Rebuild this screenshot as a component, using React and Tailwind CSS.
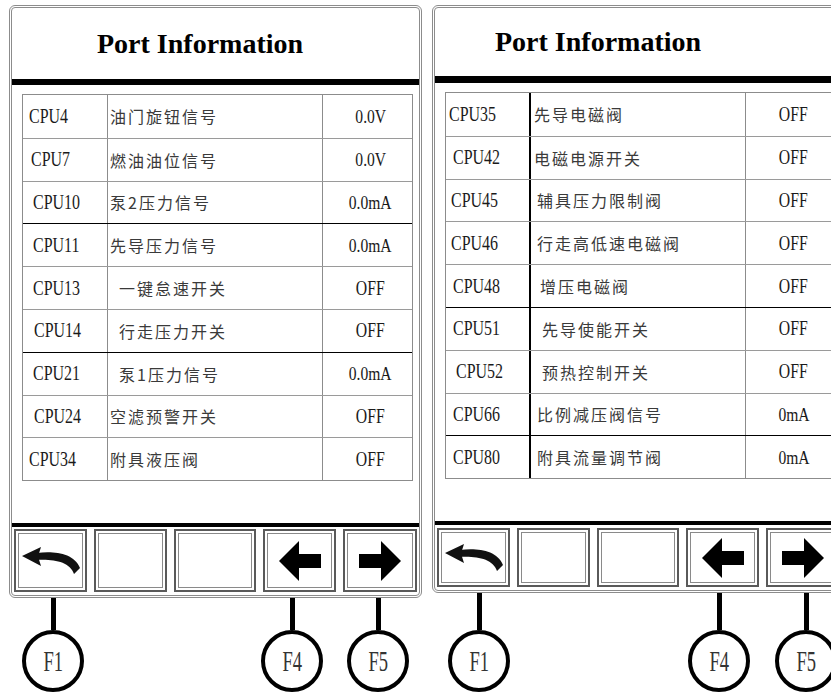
import React from 'react';

const serif = "font-['Liberation_Serif','Times_New_Roman',serif]";
const cjk = "font-['Noto_Sans_CJK_SC','Noto_Sans_CJK_TC',sans-serif]";

const leftRows = [
  { id: 'CPU4', name: '油门旋钮信号', val: '0.0V', idCls: 'pl-[6px]', nameCls: 'pl-[2px]' },
  { id: 'CPU7', name: '燃油油位信号', val: '0.0V', idCls: 'pl-[8px]', nameCls: 'pl-[2px]' },
  { id: 'CPU10', name: '泵2压力信号', val: '0.0mA', idCls: 'pl-[10px]', nameCls: 'pl-[2px]' },
  { id: 'CPU11', name: '先导压力信号', val: '0.0mA', dark: true, idCls: 'pl-[10px]', nameCls: 'pl-[2px]' },
  { id: 'CPU13', name: '一键怠速开关', val: 'OFF', idCls: 'pl-[10px]', nameCls: 'pl-[11px]' },
  { id: 'CPU14', name: '行走压力开关', val: 'OFF', idCls: 'pl-[11px]', nameCls: 'pl-[11px]' },
  { id: 'CPU21', name: '泵1压力信号', val: '0.0mA', dark: true, idCls: 'pl-[10px]', nameCls: 'pl-[11px]' },
  { id: 'CPU24', name: '空滤预警开关', val: 'OFF', idCls: 'pl-[11px]', nameCls: 'pl-[2px]' },
  { id: 'CPU34', name: '附具液压阀', val: 'OFF', idCls: 'pl-[6px]', nameCls: 'pl-[2px]' },
];

const rightRows = [
  { id: 'CPU35', name: '先导电磁阀', val: 'OFF', idCls: 'pl-[3px]', nameCls: 'pl-[3px]' },
  { id: 'CPU42', name: '电磁电源开关', val: 'OFF', idCls: 'pl-[7px]', nameCls: 'pl-[3px]' },
  { id: 'CPU45', name: '辅具压力限制阀', val: 'OFF', idCls: 'pl-[5px]', nameCls: 'pl-[6px]' },
  { id: 'CPU46', name: '行走高低速电磁阀', val: 'OFF', idCls: 'pl-[5px]', nameCls: 'pl-[6px]' },
  { id: 'CPU48', name: '增压电磁阀', val: 'OFF', idCls: 'pl-[7px]', nameCls: 'pl-[9px]' },
  { id: 'CPU51', name: '先导使能开关', val: 'OFF', dark: true, idCls: 'pl-[7px]', nameCls: 'pl-[11px]' },
  { id: 'CPU52', name: '预热控制开关', val: 'OFF', idCls: 'pl-[10px]', nameCls: 'pl-[11px]' },
  { id: 'CPU66', name: '比例减压阀信号', val: '0mA', idCls: 'pl-[7px]', nameCls: 'pl-[6px]' },
  { id: 'CPU80', name: '附具流量调节阀', val: '0mA', dark: true, idCls: 'pl-[7px]', nameCls: 'pl-[6px]' },
];

function BackArrow() {
  return (
    <svg width="58" height="28" viewBox="0 0 58 28">
      <path d="M0 9 L19 0 L16 9.5 L19 19 Z" fill="#111" />
      <path d="M15 6 C 32 4, 52 6, 58 21 L 52 27 C 48 15, 32 12, 15 13 Z" fill="#111" />
    </svg>
  );
}

function LeftArrow() {
  return (
    <svg width="42" height="40" viewBox="0 0 42 40">
      <path d="M0 20 L20 0 L20 13 L42 13 L42 27 L20 27 L20 40 Z" fill="#000" />
    </svg>
  );
}

function RightArrow() {
  return (
    <svg width="42" height="40" viewBox="0 0 42 40">
      <path d="M42 20 L22 0 L22 13 L0 13 L0 27 L22 27 L22 40 Z" fill="#000" />
    </svg>
  );
}

function Key({ w, h, children }) {
  return (
    <div className={`${w} ${h} shrink-0 border-2 border-[#5a5a5a] p-[2px]`}>
      <div className="w-full h-full border border-[#8a8a8a] flex items-center justify-center">
        {children}
      </div>
    </div>
  );
}

function Row({ row, first, col1Border }) {
  const top = first ? '' : row.dark ? 'border-t border-t-black' : 'border-t border-t-[#9a9a9a]';
  const valCls = row.val === 'OFF'
    ? 'text-[21px] scale-x-[0.75]'
    : 'text-[19px] scale-x-[0.82]';
  return (
    <div className={`flex h-[42.8px] ${top}`}>
      <div className={`w-[85px] shrink-0 flex items-center ${col1Border} ${row.idCls}`}>
        <span className={`${serif} inline-block origin-left scale-x-[0.76] text-[21px] text-[#1a1a1a] leading-none`}>
          {row.id}
        </span>
      </div>
      <div className={`w-[215px] shrink-0 flex items-center border-r border-r-[#8c8c8c] ${row.nameCls}`}>
        <span className={`${cjk} text-[16px] tracking-[2px] text-[#3a3a3a] leading-none`}>{row.name}</span>
      </div>
      <div className="flex-1 flex items-center justify-center pl-[6px]">
        <span className={`${serif} inline-block ${valCls} text-[#1a1a1a] leading-none`}>{row.val}</span>
      </div>
    </div>
  );
}

function Connector({ label, shift }) {
  return (
    <div className={`flex flex-col items-center ${shift}`}>
      <div className="w-[5px] flex-1 bg-black" />
      <div className="w-[62px] h-[62px] shrink-0 rounded-full border-[4px] border-black flex items-center justify-center">
        <span className={`${serif} inline-block scale-x-[0.64] text-[29px] text-[#333] leading-none`}>{label}</span>
      </div>
    </div>
  );
}

function Panel({ rows, panelH, titleH, lineH, titlePad, col1Border, keyH, keyPad, shifts }) {
  return (
    <div className="w-[413px] shrink-0 flex flex-col h-full">
      <div className={`${panelH} shrink-0 border-[3px] border-double border-[#8c8c8c] rounded-[6px] flex flex-col`}>
        <div className={`${titleH} shrink-0 flex items-center ${titlePad}`}>
          <h1 className={`${serif} text-[28px] font-bold text-black leading-none`}>Port Information</h1>
        </div>
        <div className={`${lineH} shrink-0 bg-black`} />
        <div className="mt-[9px] ml-[10px] mr-[6px] border border-[#8c8c8c]">
          {rows.map((r, i) => (
            <Row key={r.id} row={r} first={i === 0} col1Border={col1Border} />
          ))}
        </div>
        <div className="flex-1" />
        <div className="h-[4px] shrink-0 bg-black" />
        <div className={`flex gap-[7px] px-[2px] ${keyPad}`}>
          <Key w="w-[73px]" h={keyH}><BackArrow /></Key>
          <Key w="w-[73px]" h={keyH} />
          <Key w="w-[82px]" h={keyH} />
          <Key w="w-[73px]" h={keyH}><LeftArrow /></Key>
          <Key w="flex-1" h={keyH}><RightArrow /></Key>
        </div>
      </div>
      <div className="flex-1 flex gap-[7px] px-[5px]">
        <div className="w-[73px] shrink-0 flex justify-center">
          <Connector label="F1" shift={shifts[0]} />
        </div>
        <div className="w-[73px] shrink-0" />
        <div className="w-[82px] shrink-0" />
        <div className="w-[73px] shrink-0 flex justify-center">
          <Connector label="F4" shift={shifts[1]} />
        </div>
        <div className="flex-1 flex justify-center">
          <Connector label="F5" shift={shifts[2]} />
        </div>
      </div>
    </div>
  );
}

export default function App() {
  return (
    <div className="w-[831px] h-[694px] overflow-hidden bg-white flex gap-[10px] pl-[9px] pt-[5px] pb-[2px]">
      <Panel
        rows={leftRows}
        panelH="h-[593px]"
        titleH="h-[71px]"
        lineH="h-[6px]"
        titlePad="pl-[85px]"
        col1Border="border-r border-r-[#8c8c8c]"
        keyH="h-[63px]"
        keyPad="pt-[2px] pb-[3px]"
        shifts={['pl-[5px]', 'pr-[15px]', 'pr-[4px]']}
      />
      <Panel
        rows={rightRows}
        panelH="h-[588px]"
        titleH="h-[68px]"
        lineH="h-[7px]"
        titlePad="pl-[60px]"
        col1Border="border-r-2 border-r-black"
        keyH="h-[59px]"
        keyPad="pt-[3px] pb-[3px]"
        shifts={['pl-[11px]', 'pr-[7px]', 'pl-[6px]']}
      />
    </div>
  );
}
